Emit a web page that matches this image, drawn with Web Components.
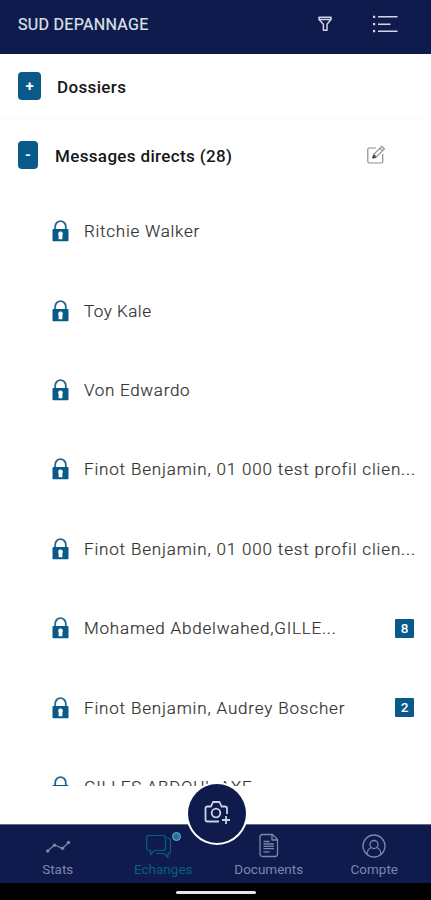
<!DOCTYPE html>
<html lang="fr">
<head>
<meta charset="UTF-8">
<meta name="viewport" content="width=device-width, initial-scale=1">
<title>Echanges</title>
<style>
    body {
        margin: 0;
        background: #fff;
        font-family: Roboto, "Liberation Sans", sans-serif;
    }
</style>
</head>
<body>
<message-app>
    <app-header slot="header" name="SUD DEPANNAGE"></app-header>
    <section-row sign="+" class="folders">Dossiers</section-row>
    <section-row sign="-" compose>Messages directs (28)</section-row>
    <chat-row style="--spacing: 0.75px">Ritchie Walker</chat-row>
    <chat-row style="--spacing: 0.5px">Toy Kale</chat-row>
    <chat-row style="--spacing: 0.7px">Von Edwardo</chat-row>
    <chat-row>Finot Benjamin, 01 000 test profil clien...</chat-row>
    <chat-row>Finot Benjamin, 01 000 test profil clien...</chat-row>
    <chat-row count="8" style="--spacing: 0.8px">Mohamed Abdelwahed,GILLE...</chat-row>
    <chat-row count="2">Finot Benjamin, Audrey Boscher</chat-row>
    <chat-row style="--spacing: 0.68px">GILLES ABDOUL AXE</chat-row>
    <app-nav slot="nav"></app-nav>
</message-app>

<script>
// Attache un shadow root ouvert avec son contenu
function render(host, html) {
    host.attachShadow({ mode: 'open' }).innerHTML = html;
}

// Structure générale : en-tête, liste, navigation
class MessageApp extends HTMLElement {
    constructor() {
        super();
        render(this, `
            <style>
                :host { display: flex; flex-direction: column; height: 900px; overflow: hidden; }
                main { flex: 1; min-height: 0; overflow: hidden; margin-bottom: 38px; }
            </style>
            <slot name="header"></slot>
            <main><slot></slot></main>
            <slot name="nav"></slot>
        `);
    }
}

class AppHeader extends HTMLElement {
    connectedCallback() {
        render(this, `
            <style>
                :host {
                    display: flex;
                    align-items: center;
                    flex: none;
                    box-sizing: border-box;
                    height: 54px;
                    padding: 0 33px 6px 18px;
                    background: #0f1b4c;
                    color: #dfe2ea;
                }
                .name { flex: 1; font-size: 16px; font-weight: 400; letter-spacing: 0.3px; -webkit-text-stroke: 0.2px; }
                svg { fill: none; stroke: #d3d6e2; display: block; }
                .filter { margin-right: 40px; }
            </style>
            <span class="name">${this.getAttribute('name')}</span>
            <svg class="filter" width="14" height="16" viewBox="0 0 14 16" stroke-width="1.5" stroke-linejoin="round">
                <path d="M1 1.3h12v2.200L9 8.300v6H5.400v-6L1 3.500zM1.500 3.500h11"/>
            </svg>
            <svg width="26" height="20" viewBox="0 0 26 20" stroke-width="1.5">
                <path d="M6 2.800h19.500M6 10.200h12.500M6 17.200h19.500"/>
                <path d="M1 2.800h2.200M1 10.200h2.200M1 17.200h2.200" stroke-width="2.200"/>
            </svg>
        `);
    }
}
customElements.define('app-header', AppHeader);

// Titre de section avec son bouton +/-
class SectionRow extends HTMLElement {
    connectedCallback() {
        const compose = this.hasAttribute('compose') ? `
            <svg width="20" height="20" viewBox="0 0 20 20" fill="none" stroke="#8c8c8c" stroke-width="1.2" stroke-linejoin="round">
                <path d="M10 3H3.200Q1.800 3 1.800 4.500v12Q1.800 18 3.200 18h12q1.500 0 1.500-1.500V9"/>
                <path d="m7 12.800.8-3.500 8-8 2.600 2.600-8 8zM14 3.200l2.600 2.600M7.800 9.300l2.600 2.600"/>
                <path d="m7 12.800.5-2.300 1.800 1.800z" fill="#333" stroke="#444"/>
            </svg>` : '';
        render(this, `
            <style>
                :host {
                    display: flex;
                    align-items: center;
                    box-sizing: border-box;
                    height: 72.5px;
                    padding: 0 45px 0 18px;
                    color: #171717;
                }
                :host(.folders) { height: 65px; border-bottom: 1px solid #fafafa; }
                .sign {
                    width: 20px;
                    height: 28px;
                    margin-right: 17px;
                    border-radius: 4px;
                    background: #09598a;
                    color: #fff;
                    font-size: 15px;
                    font-weight: 700;
                    line-height: 29px;
                    text-align: center;
                }
                :host(.folders) .sign { width: 23px; margin-right: 16px; }
                .label { flex: 1; padding-top: 1px; font-size: 17px; font-weight: 500; letter-spacing: 0.35px; }
            </style>
            <span class="sign">${this.getAttribute('sign')}</span>
            <span class="label"><slot></slot></span>
            ${compose}
        `);
    }
}
customElements.define('section-row', SectionRow);

// Conversation privée, avec un compteur de non-lus facultatif
class ChatRow extends HTMLElement {
    connectedCallback() {
        const count = this.getAttribute('count');
        render(this, `
            <style>
                :host {
                    display: flex;
                    align-items: center;
                    box-sizing: border-box;
                    height: 79.4px;
                    padding: 0 17px 0 52px;
                    color: #333;
                }
                svg { flex: none; margin-right: 15px; }
                .label { flex: 1; font-size: 17px; font-weight: 300; letter-spacing: var(--spacing, 0.84px); white-space: nowrap; -webkit-text-stroke: 0.2px; }
                .count {
                    width: 19px;
                    height: 19px;
                    border-radius: 1px;
                    background: #09598a;
                    color: #fff;
                    font-size: 13.5px;
                    font-weight: 500;
                    line-height: 19px;
                    text-align: center;
                }
            </style>
            <svg width="17" height="22" viewBox="0 0 17 22">
                <path d="M3.200 10V6.500a5.300 5.300 0 0 1 10.600 0V10" fill="none" stroke="#28658f" stroke-width="1.800"/>
                <rect x=".5" y="9" width="16" height="12.300" rx=".8" fill="#09598a"/>
                <path d="M8.500 11.500a2.300 2.300 0 0 1 1.900 3.700v4H6.600v-4a2.300 2.300 0 0 1 1.900-3.700z" fill="#fff"/>
            </svg>
            <span class="label"><slot></slot></span>
            ${count ? `<span class="count">${count}</span>` : ''}
        `);
    }
}
customElements.define('chat-row', ChatRow);

class AppNav extends HTMLElement {
    constructor() {
        super();
        render(this, `
            <style>
                :host { display: block; flex: none; position: relative; }
                nav {
                    display: grid;
                    grid-template-columns: repeat(4, 105.5px);
                    justify-content: center;
                    box-sizing: border-box;
                    height: 59px;
                    padding: 8px 0 0 1px;
                    border-top: 1px solid #65698a;
                    background: #0f1b4c;
                    color: #7e86a8;
                }
                .tab { display: flex; flex-direction: column; align-items: center; font-size: 13.5px; letter-spacing: 0; line-height: 17px; }
                .active { color: #075f86; }
                svg { display: block; fill: none; stroke: currentColor; }
                .icon { position: relative; height: 28px; }
                .dot {
                    position: absolute;
                    right: -1px;
                    top: -1px;
                    width: 7px;
                    height: 7px;
                    border: 1.5px solid #8ba4bf;
                    border-radius: 50%;
                    background: #1878ab;
                }
                .fab {
                    position: absolute;
                    left: 186px;
                    top: -42.5px;
                    display: grid;
                    place-items: center;
                    width: 58px;
                    height: 59px;
                    border: 2.5px solid #fff;
                    border-radius: 50%;
                    background: #0f1b4c;
                    color: #ccd1df;
                }
                .fab svg { margin-bottom: 3px; }
                .system { display: flex; justify-content: center; height: 17px; background: #000; }
                .system i { width: 80px; height: 3px; margin-top: 8px; border-radius: 2px; background: #e6e6e6; }
            </style>
            <nav>
                <div class="tab">
                    <div class="icon"><svg width="26" height="26" viewBox="0 0 26 26" stroke-width="1.300">
                        <path d="m2.500 18 7-6 8 3.500 6-6"/>
                        <g fill="currentColor" stroke="none"><circle cx="2.700" cy="18" r="1.700"/><circle cx="9.500" cy="12.200" r="1.700"/><circle cx="17.500" cy="15.300" r="1.700"/><circle cx="23.500" cy="9.500" r="1.700"/></g>
                    </svg></div>
                    Stats
                </div>
                <div class="tab active">
                    <div class="icon"><svg width="34" height="26" viewBox="0 0 34 26" stroke-width="1.200" stroke-linejoin="round">
                        <path d="M3 2.500h14q2.500 0 2.500 2.500v10q0 2.500-2.500 2.500H8.500l-4 4v-4H3Q.7 17.500.7 15V5Q.7 2.500 3 2.500z"/>
                        <path d="M21 5q3.500 0 3.500 2.500V18q0 2.500-2.500 2.500v3.800l-4-3.800h-8"/>
                    </svg><span class="dot"></span></div>
                    Echanges
                </div>
                <div class="tab">
                    <div class="icon"><svg width="20" height="26" viewBox="0 0 20 26" stroke-width="1.300" stroke-linejoin="round">
                        <path d="M3.500 1.500h10l5 5v14.500q0 2.500-2.500 2.500H3.500Q1 23.500 1 21V4q0-2.500 2.500-2.500zM13 1.500V7h5.500"/>
                        <path d="M4.500 8.500h6M4.500 11h10.500M4.500 13.300h10.500M4.500 15.600h10.500M4.500 18.800h6"/>
                    </svg></div>
                    Documents
                </div>
                <div class="tab">
                    <div class="icon"><svg width="24" height="26" viewBox="0 0 24 26" stroke-width="1.300">
                        <circle cx="12" cy="13" r="11"/>
                        <circle cx="12" cy="11.500" r="4"/>
                        <path d="M5 21q.5-5.300 4.500-6.500M19 21q-.5-5.300-4.500-6.500"/>
                    </svg></div>
                    Compte
                </div>
            </nav>
            <div class="fab">
                <svg width="28" height="28" viewBox="0 0 28 28" stroke-width="1.800" stroke-linejoin="round">
                    <path d="M16 23.500H4.500Q2.500 23.500 2.500 21.500V10.500Q2.500 8.500 4.500 8.500H8l2-4.500h6.500l2 4.500h3.500q2 0 2 2v5.500"/>
                    <circle cx="13" cy="15" r="4.300"/>
                    <path d="M23 18v8M19 22h8"/>
                </svg>
            </div>
            <div class="system"><i></i></div>
        `);
    }
}
customElements.define('app-nav', AppNav);
customElements.define('message-app', MessageApp);
</script>
</body>
</html>
